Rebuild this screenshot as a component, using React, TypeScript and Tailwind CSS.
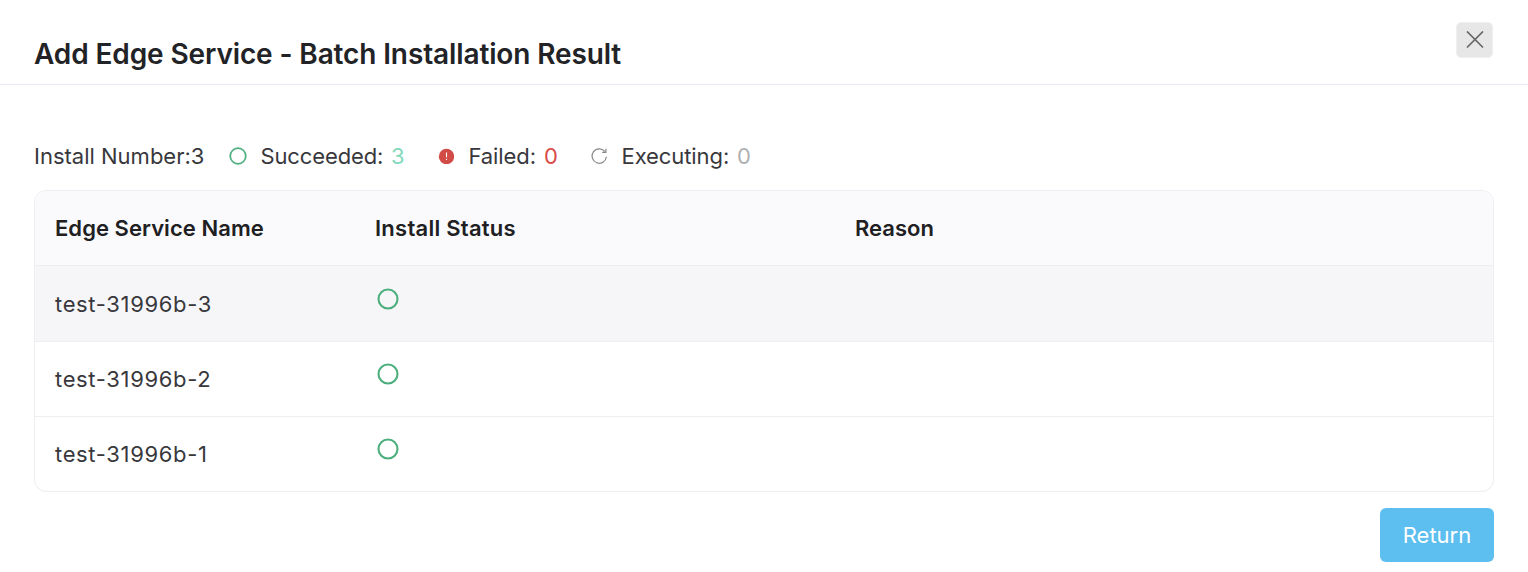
const rows = ["test-31996b-3", "test-31996b-2", "test-31996b-1"];

function SuccessIcon({ className }: { className: string }) {
  return (
    <svg className={className} viewBox="0 0 22 22" fill="none" stroke="#4caf7d" strokeWidth="2.1">
      <circle cx="11" cy="11" r="9.5" />
    </svg>
  );
}

export default function App() {
  return (
    <div className="h-[572px] w-[1528px] overflow-hidden bg-white font-['Inter',sans-serif] text-[22px] text-[#38383c]">
      <header className="flex h-[85px] items-start justify-between border-b border-[#e9e9f1] pl-[34px] pr-[35px]">
        <h1 className="pt-[34px] text-[28px] leading-[40px] font-semibold tracking-[-0.12px] text-[#222327]">
          Add Edge Service - Batch Installation Result
        </h1>
        <button className="mt-[22px] flex h-9 w-[37px] items-center justify-center rounded-[5px] border border-[#f0f0f0] bg-[#e7e7e7]">
          <svg className="size-[18px]" viewBox="0 0 18 18" stroke="#666" strokeWidth="1.7">
            <path d="M1 .5 17 16.5M17 .5 1 16.5" />
          </svg>
        </button>
      </header>
      <main className="px-[34px] pt-[56px]">
        <div className="flex h-[30px] items-center leading-[30px]">
          <span className="w-[195px]">Install Number:3</span>
          <SuccessIcon className="size-[18px]" />
          <span className="ml-[13.5px] w-[130.5px] tracking-[-0.13px]">Succeeded:</span>
          <span className="w-[47px] text-[#83d9bd]">3</span>
          <svg className="size-4" viewBox="0 0 16 16">
            <circle cx="8.5" cy="8.5" r="7.7" fill="#d24c47" />
            <path d="M8.5 4.5v4.8M8.5 10.7v1.3" stroke="#fff" strokeWidth="1.1" />
          </svg>
          <span className="ml-[14.5px] w-[75.5px] tracking-[-0.1px]">Failed:</span>
          <span className="w-[46px] text-[#d94b45]">0</span>
          <svg className="size-[18px]" viewBox="0 0 18 18" fill="none" stroke="#85878a" strokeWidth="1.2">
            <path d="M16.4 9.8a7.2 7.2 0 1 1-1.7-5.5M15.9 1.8v3.6h-3.7" />
          </svg>
          <span className="ml-[13.5px] w-[115.5px] tracking-[-0.08px]">Executing:</span>
          <span className="text-[#b0b0b2]">0</span>
        </div>
        <div className="mt-[19px] h-[302px] w-[1460px] overflow-hidden rounded-xl border border-[#ededf2]">
          <div className="grid h-[75px] grid-cols-[320px_480px_1fr] items-center border-b border-[#ededf0] bg-[#fafafc] pl-5 font-semibold text-[#202022]">
            <span className="tracking-[0.05px]">Edge Service Name</span>
            <span className="tracking-[0.25px]">Install Status</span>
            <span>Reason</span>
          </div>
          {rows.map((name) => (
            <div key={name} className="grid h-[75px] grid-cols-[320px_480px_1fr] items-start border-b border-[#ededf2] pl-5 nth-2:h-[76px] nth-2:bg-[#f6f6f9] nth-2:pt-px last:border-b-0">
              <span className="mt-[20.5px] leading-[33px] tracking-[0.65px]">{name}</span>
              <SuccessIcon className="mt-[21px] ml-[1.5px] size-[22px]" />
            </div>
          ))}
        </div>
        <div className="mt-4 flex justify-end">
          <button className="h-[54px] w-[114px] rounded-[6px] bg-[#5dbef0] text-white">Return</button>
        </div>
      </main>
    </div>
  );
}
